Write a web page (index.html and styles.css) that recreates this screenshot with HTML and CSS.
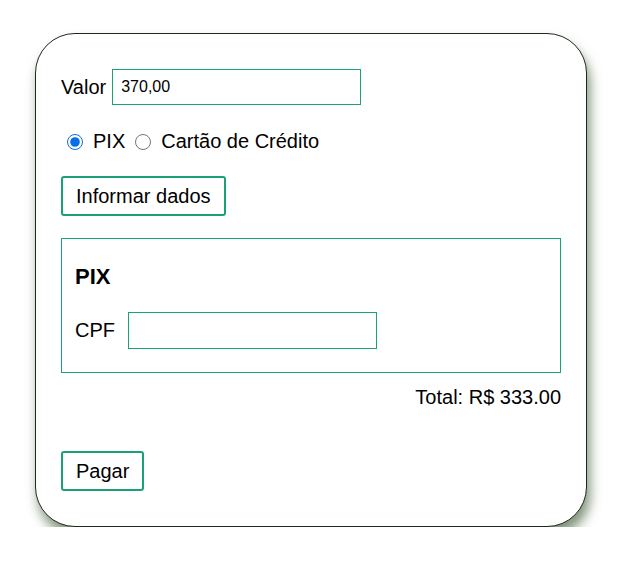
FILE: index.html
```html
<!DOCTYPE html>
<html lang="pt-BR">
<head>
<meta charset="utf-8">
<link rel="stylesheet" href="styles.css">
</head>
<body>
<div class="card">
  <div class="row valor-row">
    <label class="lbl" for="valor">Valor</label>
    <input id="valor" class="valor-input" type="text" value="370,00">
  </div>
  <div class="row radios">
    <input id="pix" class="radio" type="radio" name="m" checked>
    <label for="pix" class="rlabel">PIX</label>
    <input id="cc" class="radio" type="radio" name="m">
    <label for="cc" class="rlabel">Cartão de Crédito</label>
  </div>
  <button class="btn">Informar dados</button>
  <div class="pixbox">
    <h3 class="pixtitle">PIX</h3>
    <div class="row cpf-row">
      <label class="lbl" for="cpf">CPF</label>
      <input id="cpf" class="cpf-input" type="text">
    </div>
  </div>
  <div class="total">Total: R$ 333.00</div>
  <button class="btn pay">Pagar</button>
</div>
</body>
</html>
```
FILE: styles.css
```css
html, body {
  margin: 0;
  padding: 0;
  background: #fff;
}
body {
  padding: 33px 0 0 35px;
  font-family: "Liberation Sans", Arial, sans-serif;
  font-size: 20px;
  color: #000;
}
.card {
  box-sizing: border-box;
  width: 552px;
  height: 494px;
  border: 1px solid #1c2a1c;
  border-radius: 40px;
  padding: 35px 25px 0 25px;
  box-shadow: 3px 9px 12px rgba(45, 75, 35, 0.6);
  background: #fff;
}
.row {
  display: flex;
  align-items: center;
}
.lbl {
  font-size: 20px;
  line-height: 23px;
}
.valor-row .lbl {
  margin-right: 6px;
}
.valor-input {
  box-sizing: border-box;
  width: 249px;
  height: 36px;
  border: 1px solid #1aa179;
  padding: 0 8px;
  font-family: "Liberation Sans", Arial, sans-serif;
  font-size: 16px;
  outline: none;
  margin: 0;
}
.radios {
  margin-top: 25px;
  height: 23px;
  padding-left: 6px;
}
.radio {
  width: 16px;
  height: 16px;
  margin: 0 10px 0 0;
  accent-color: #0a6ee6;
}
.rlabel {
  margin-right: 10px;
}
.btn {
  display: block;
  margin-top: 23px;
  background: #fff;
  border: 2px solid #1aa179;
  border-radius: 3px;
  font-family: "Liberation Sans", Arial, sans-serif;
  font-size: 20px;
  line-height: 24px;
  padding: 6px 13px 6px 13px;
  color: #000;
}
.pixbox {
  margin-top: 22px;
  border: 1px solid #1aa179;
  height: 135px;
  box-sizing: border-box;
  padding: 0 13px;
}
.pixtitle {
  margin: 25px 0 0 0;
  font-size: 22px;
  line-height: 25px;
  font-weight: bold;
}
.cpf-row {
  margin-top: 23px;
}
.cpf-row .lbl {
  margin-right: 13px;
}
.cpf-input {
  box-sizing: border-box;
  width: 249px;
  height: 37px;
  border: 1px solid #1aa179;
  margin: 0;
  outline: none;
}
.total {
  text-align: right;
  margin-top: 13px;
  line-height: 23px;
}
.pay {
  margin-top: 42px;
}
```
